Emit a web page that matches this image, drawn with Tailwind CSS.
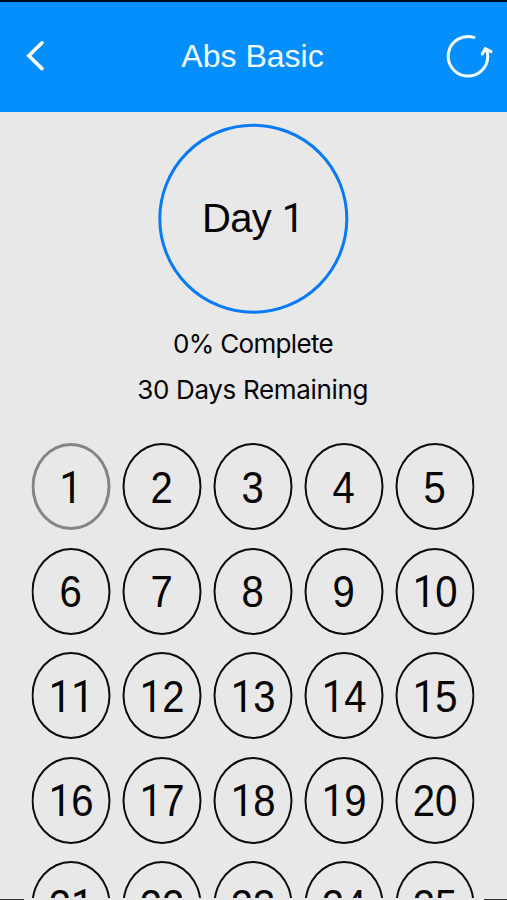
<!DOCTYPE html>
<html lang="en">
<head>
<meta charset="utf-8">
<title>Abs Basic</title>
<script src="https://cdn.jsdelivr.net/npm/@tailwindcss/browser@4"></script>
</head>
<body class="bg-[#e8e8e8]">
<div class="relative flex h-[900px] w-[507px] flex-col overflow-hidden bg-[#e8e8e8] font-['Liberation_Sans',Arial,sans-serif] text-[#050505]">
  <header class="flex h-[111.5px] shrink-0 items-center justify-between border-t-2 border-[#020a18] bg-[#058ffd] pr-[14px] pb-[2px] pl-[25px]">
    <svg class="h-8 w-[60px] shrink-0" viewBox="0 0 60 32" fill="none" stroke="#fff" stroke-width="3.6" stroke-linecap="round" stroke-linejoin="miter"><path d="M17 2.8 3.8 15.7 17 28.6"/></svg>
    <h1 class="-translate-x-[12.5px] text-[32px] leading-none text-[#effbff]">Abs Basic</h1>
    <svg class="h-12 w-12 shrink-0" viewBox="445 32 48 48" fill="none" stroke="#f2fcff" stroke-width="3" stroke-linecap="round" stroke-linejoin="round"><path d="M474 37.4A19.8 19.8 0 1 0 487.8 56.5C487.9 53.5 487 51 485.4 49M482.3 54 485.2 48.6 491 51.6"/></svg>
  </header>
  <main class="flex min-h-0 flex-col items-center pt-[12px]">
    <div class="flex h-[190px] w-[190px] shrink-0 -translate-x-[0.7px] -translate-y-[0.3px] items-center justify-center rounded-full border-[3px] border-[#077bf5] text-[40px] leading-none tracking-[-0.6px]"><span class="whitespace-pre">Day <span class="font-[Roboto]">1</span></span></div>
    <p class="mt-[13px] h-[34px] -translate-x-[0.5px] text-[26px] leading-[34px] tracking-[-0.65px] font-[Inter]">0% Complete</p>
    <p class="mt-[12px] h-[34px] -translate-x-[0.8px] text-[26px] leading-[34px] tracking-[-0.32px] font-[Inter]">30 Days Remaining</p>
    <div id="days" class="mt-[36.5px] grid h-[455px] shrink-0 -translate-x-[0.5px] grid-cols-[repeat(5,79px)] auto-rows-[87px] gap-x-[12px] gap-y-[17.5px] overflow-hidden"></div>
  </main>
  <footer class="absolute inset-x-0 bottom-0 flex h-[2px] items-end justify-between bg-[#e8e8e8]"><i class="h-px w-6 bg-[#333]"></i><i class="h-px w-[23px] bg-[#333]"></i></footer>
</div>
<script>
const grid = document.getElementById('days');
for (let day = 1; day <= 25; day++) {
  const label = String(day).replace(/1/g, '<span class="font-[Roboto]">1</span>');
  const ring = day === 1 ? 'border-[3.5px] border-[#858585]' : 'border-[2px] border-[#0c0c0c]';
  grid.insertAdjacentHTML('beforeend',
    `<button class="flex items-center justify-center rounded-[50%] ${ring}"><span class="block translate-y-[1px] scale-x-[0.91] text-[44px] leading-none">${label}</span></button>`);
}
</script>
</body>
</html>
